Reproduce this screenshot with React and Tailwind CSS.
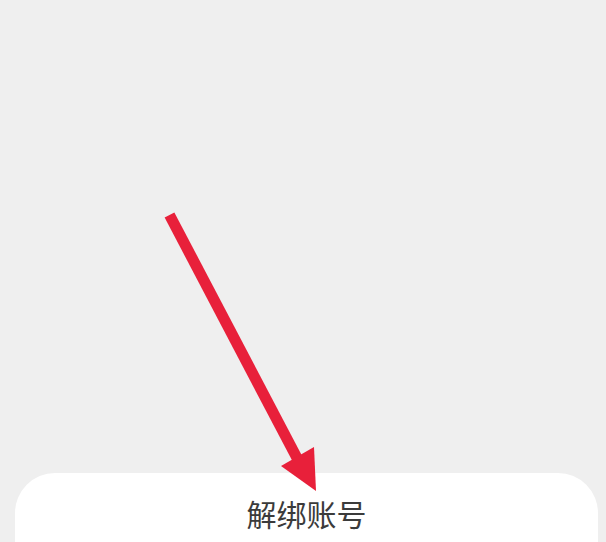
import React from "react";

function Arrow() {
  return (
    <svg
      className="absolute left-0 top-0 pointer-events-none"
      width="606"
      height="542"
      viewBox="0 0 606 542"
    >
      <line x1="169.5" y1="215" x2="297" y2="458" stroke="#e8203a" strokeWidth="11" strokeLinecap="butt" />
      <polygon points="281,466 314,447 316,491" fill="#e8203a" />
    </svg>
  );
}

export default function App() {
  return (
    <div className="relative w-[606px] h-[542px] overflow-hidden bg-[#efefef] flex flex-col">
      <div className="flex-1" />
      <div className="ml-[15px] mr-[8px] h-[69px] bg-white rounded-t-[40px] flex items-start justify-center pt-[25px]">
        <span
          className="text-[30px] leading-[30px] text-[#3b3b3b]"
          style={{ fontFamily: '"Noto Sans CJK SC", "Noto Sans", sans-serif' }}
        >
          解绑账号
        </span>
      </div>
      <Arrow />
    </div>
  );
}
